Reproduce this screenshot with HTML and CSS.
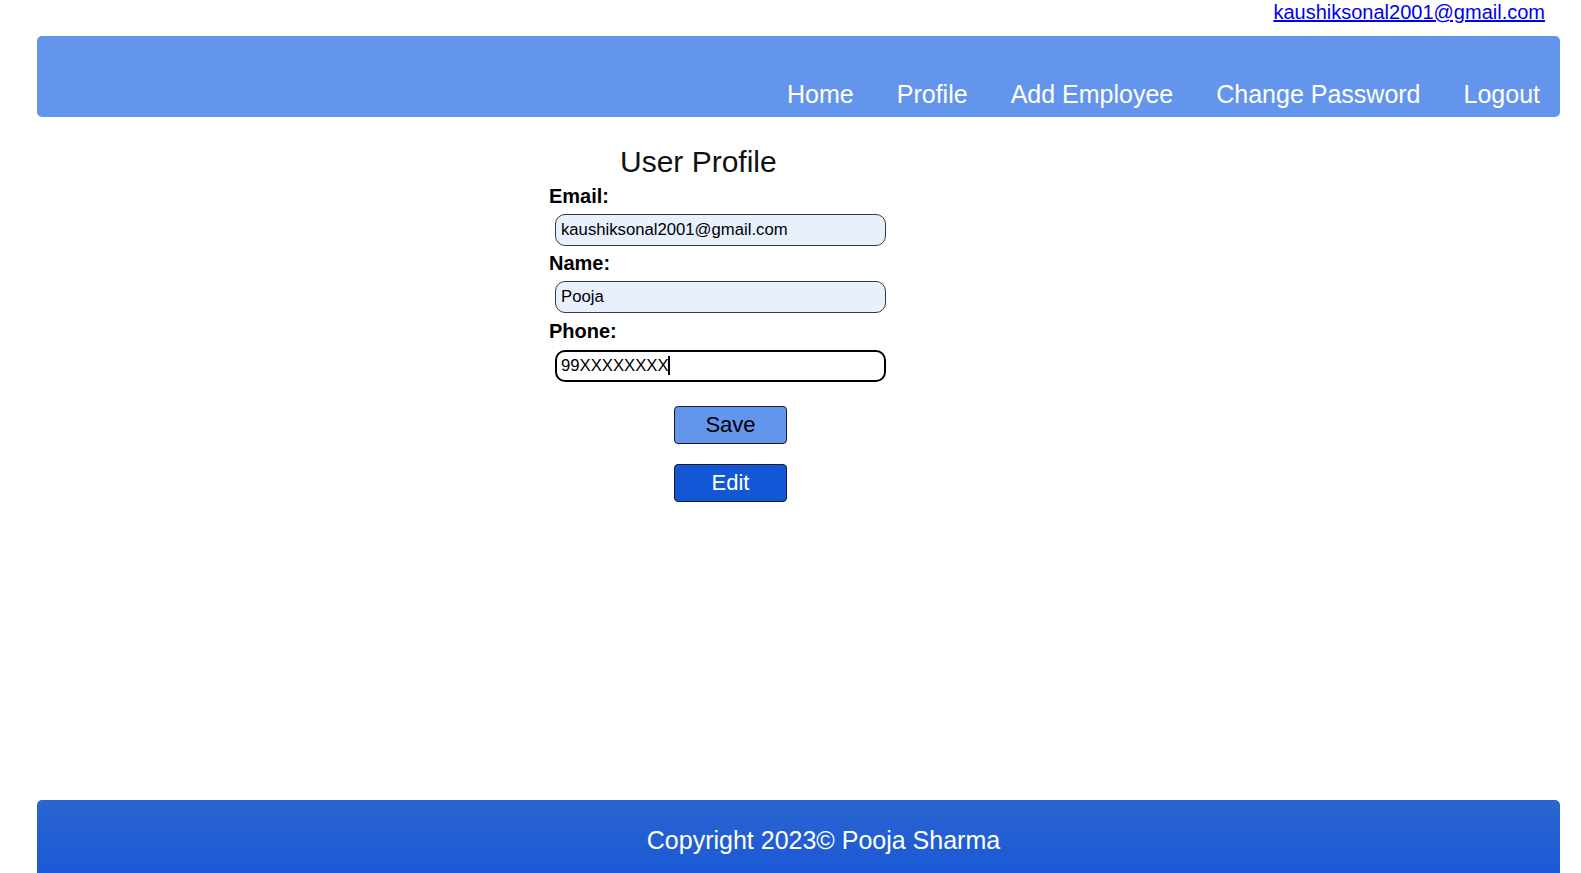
FILE: index.html
```html
<!DOCTYPE html>
<html lang="en">
<head>
<meta charset="utf-8">
<title>User Profile</title>
<link rel="stylesheet" href="styles.css">
</head>
<body>
<div class="page">
  <div class="topbar">
    <a class="user-link" href="#">kaushiksonal2001@gmail.com</a>
  </div>
  <header class="header">
    <nav class="nav">
      <a href="#">Home</a>
      <a href="#">Profile</a>
      <a href="#">Add Employee</a>
      <a href="#">Change Password</a>
      <a href="#">Logout</a>
    </nav>
  </header>
  <main class="main">
    <form class="profile-form">
      <h2 class="title">User Profile</h2>
      <label class="label" for="email">Email:</label>
      <input class="field field-filled" id="email" type="text" value="kaushiksonal2001@gmail.com">
      <label class="label" for="name">Name:</label>
      <input class="field field-filled" id="name" type="text" value="Pooja">
      <label class="label label-phone" for="phone">Phone:</label>
      <div class="field-wrap">
        <input class="field field-focus" id="phone" type="text" value="99XXXXXXXX">
        <span class="caret"></span>
      </div>
      <div class="actions">
        <button type="button" class="btn btn-save">Save</button>
        <button type="button" class="btn btn-edit">Edit</button>
      </div>
    </form>
  </main>
  <footer class="footer">Copyright 2023© Pooja Sharma</footer>
</div>
</body>
</html>
```
FILE: styles.css
```css
* { box-sizing: border-box; }
html, body { margin: 0; padding: 0; overflow: hidden; }
body {
  font-family: "Liberation Sans", Arial, sans-serif;
  color: #000;
  background: #fff;
}
.page {
  height: 873px;
  display: flex;
  flex-direction: column;
}
.topbar {
  height: 36px;
  padding: 1px 36px 0 0;
  text-align: right;
  font-size: 20px;
  line-height: 23px;
}
.user-link { color: #0000ee; text-decoration: underline; }
.header {
  margin: 0 21px 0 37px;
  height: 81px;
  background: #6495ed;
  border-radius: 5px;
  display: flex;
  justify-content: flex-end;
  align-items: flex-end;
  padding: 0 20px 8px 0;
}
.nav {
  display: flex;
  gap: 43px;
}
.nav a {
  color: #fff;
  text-decoration: none;
  font-size: 25px;
  line-height: 29px;
}
.main { flex: 0 0 auto; }
.profile-form {
  margin-left: 549px;
  width: 362px;
  display: flex;
  flex-direction: column;
  align-items: flex-start;
}
.title {
  margin: 28px 0 0 71px;
  font-size: 30px;
  font-weight: normal;
  line-height: 34px;
  color: #111;
}
.label {
  margin-top: 6px;
  font-size: 20px;
  font-weight: bold;
  line-height: 23px;
}
.label-phone { margin-top: 7px; }
.field {
  width: 331px;
  height: 32px;
  margin: 0;
  padding: 0 5px;
  font-family: "Liberation Sans", Arial, sans-serif;
  font-size: 16.7px;
  color: #000;
  border-radius: 10px;
  outline: none;
}
.label + .field { margin: 6px 0 0 6px; }
.field-filled {
  background: #e8f0fe;
  border: 1px solid #3a3a3a;
}
.field-wrap { position: relative; margin: 7px 0 0 6px; }
.field-focus {
  background: #fff;
  border: 2px solid #000;
  padding: 0 4px;
}
.caret {
  position: absolute;
  left: 113px;
  top: 6px;
  width: 2px;
  height: 19px;
  background: #000;
}
.actions {
  margin: 24px 0 0 125px;
  display: flex;
  flex-direction: column;
  gap: 20px;
}
.btn {
  width: 113px;
  height: 38px;
  border: 1px solid #1a1a2e;
  border-radius: 4px;
  font-family: "Liberation Sans", Arial, sans-serif;
  font-size: 22px;
  padding: 0;
  cursor: pointer;
}
.btn-save { background: #6495ed; color: #000; }
.btn-edit { background: #1258d6; color: #fff; }
.footer {
  margin: auto 21px 0 37px;
  height: 73px;
  flex: 0 0 auto;
  background: linear-gradient(#2a65d0, #1b59d6);
  border-radius: 5px 5px 0 0;
  color: #fff;
  font-size: 25px;
  line-height: 29px;
  text-align: center;
  padding: 26px 0 0 50px;
}
```
